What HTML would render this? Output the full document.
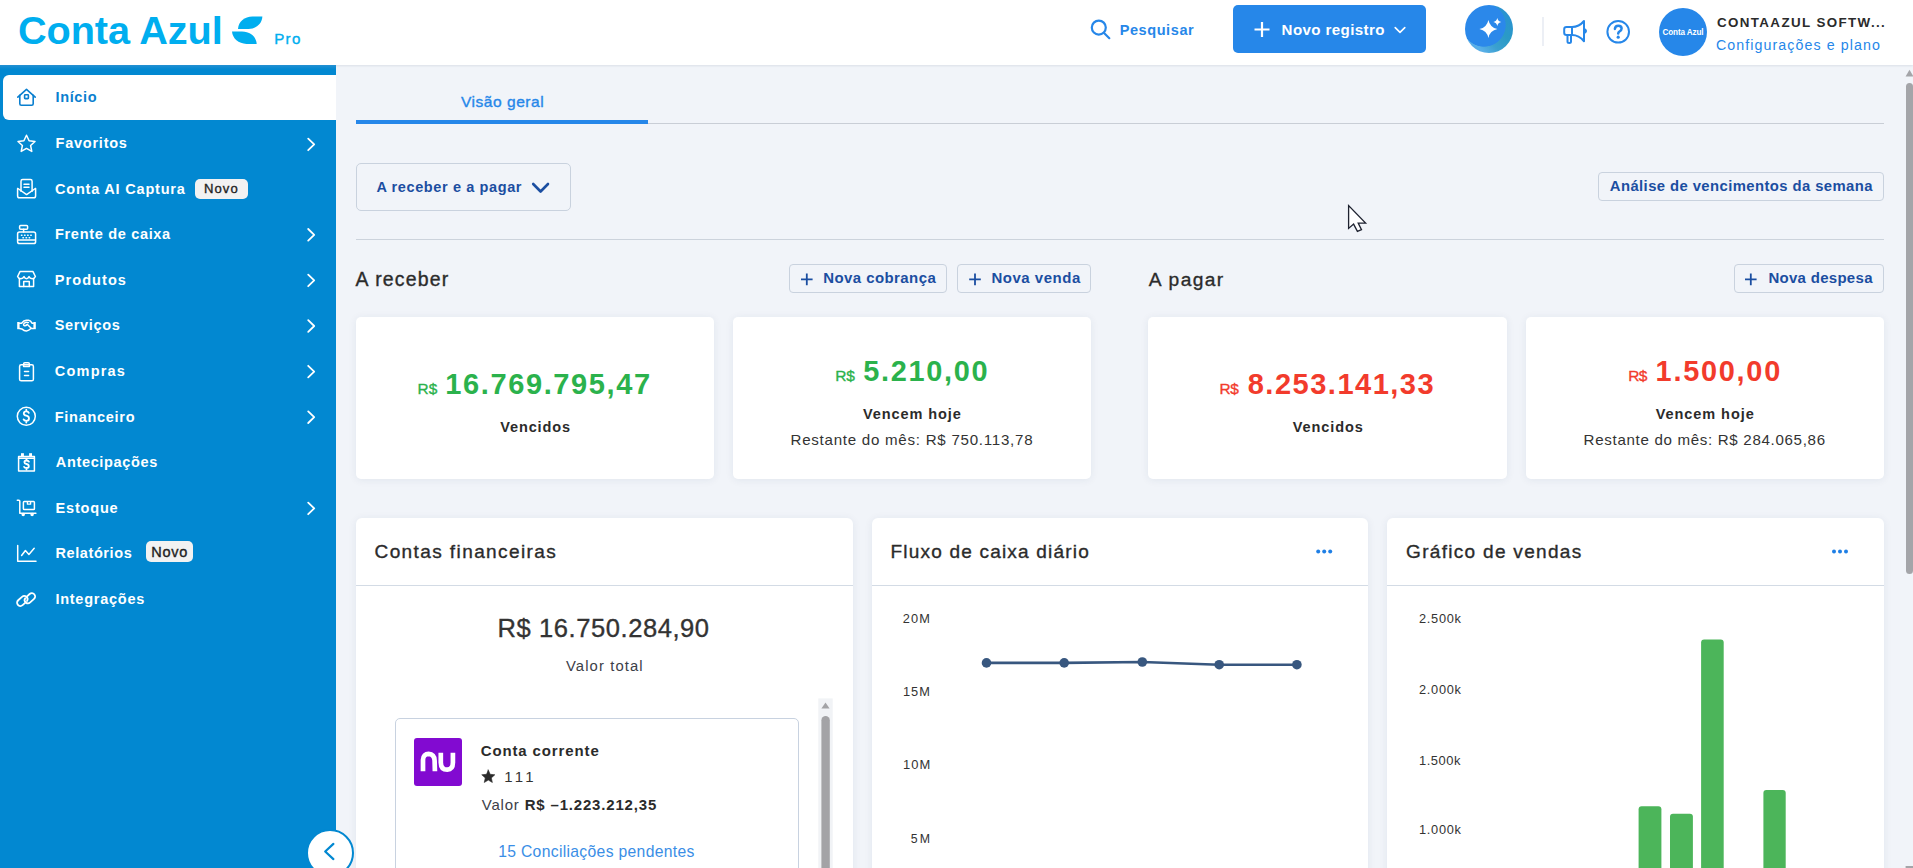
<!DOCTYPE html>
<html lang="pt-BR">
<head>
<meta charset="utf-8">
<title>Conta Azul Pro - Início</title>
<style>
html,body{margin:0;padding:0}
body{width:1913px;height:868px;overflow:hidden;position:relative;background:#f1f4f9;font-family:"Liberation Sans",sans-serif;}
.a{position:absolute;box-sizing:border-box}
.t{position:absolute;white-space:nowrap}
.t b{font-weight:700}
svg{position:absolute;overflow:visible}
</style>
</head>
<body>
<!-- header -->
<div class="a" style="left:0;top:0;width:1913px;height:65px;background:#fff;box-shadow:0 1px 2px rgba(30,50,80,.10)"></div>
<!-- sidebar -->
<div class="a" style="left:0;top:65px;width:336px;height:803px;background:linear-gradient(#2590d2 0,#0288d1 4px)"></div>
<div class="a" style="left:3px;top:75px;width:333px;height:45px;background:#fff;border-radius:6px 0 0 6px"></div>
<!-- tabs -->
<div class="a" style="left:356px;top:123px;width:1528px;height:1px;background:#c9ced6"></div>
<div class="a" style="left:356px;top:120px;width:292px;height:4px;background:#2687e9"></div>
<!-- filter -->
<div class="a" style="left:356px;top:163px;width:215px;height:48px;border:1px solid #c9d2de;border-radius:5px"></div>
<div class="a" style="left:1598px;top:172px;width:286px;height:29px;border:1px solid #c9d2de;border-radius:4px"></div>
<div class="a" style="left:356px;top:239px;width:1528px;height:1px;background:#ccd3dc"></div>
<!-- section buttons -->
<div class="a" style="left:789px;top:264px;width:158px;height:29px;border:1px solid #c9d2de;border-radius:4px"></div>
<div class="a" style="left:957px;top:264px;width:134px;height:29px;border:1px solid #c9d2de;border-radius:4px"></div>
<div class="a" style="left:1734px;top:264px;width:150px;height:29px;border:1px solid #c9d2de;border-radius:4px"></div>
<!-- cards -->
<div class="a" style="left:356px;top:317px;width:358px;height:162px;background:#fff;border-radius:5px;box-shadow:0 1px 9px rgba(30,50,90,.075)"></div>
<div class="a" style="left:733px;top:317px;width:358px;height:162px;background:#fff;border-radius:5px;box-shadow:0 1px 9px rgba(30,50,90,.075)"></div>
<div class="a" style="left:1148px;top:317px;width:359px;height:162px;background:#fff;border-radius:5px;box-shadow:0 1px 9px rgba(30,50,90,.075)"></div>
<div class="a" style="left:1526px;top:317px;width:358px;height:162px;background:#fff;border-radius:5px;box-shadow:0 1px 9px rgba(30,50,90,.075)"></div>
<!-- widgets -->
<div class="a" style="left:356px;top:518px;width:496.7px;height:400px;background:#fff;border-radius:6px;box-shadow:0 1px 9px rgba(30,50,90,.075)"></div>
<div class="a" style="left:871.7px;top:518px;width:496.7px;height:400px;background:#fff;border-radius:6px;box-shadow:0 1px 9px rgba(30,50,90,.075)"></div>
<div class="a" style="left:1387.3px;top:518px;width:496.7px;height:400px;background:#fff;border-radius:6px;box-shadow:0 1px 9px rgba(30,50,90,.075)"></div>
<div class="a" style="left:356px;top:585px;width:496.7px;height:1px;background:#d3dbe5"></div>
<div class="a" style="left:871.7px;top:585px;width:496.7px;height:1px;background:#d3dbe5"></div>
<div class="a" style="left:1387.3px;top:585px;width:496.7px;height:1px;background:#d3dbe5"></div>
<!-- account card -->
<div class="a" style="left:394.5px;top:718px;width:404.5px;height:200px;border:1px solid #c8d2e0;border-radius:5px;background:#fff"></div>
<div class="a" style="left:414px;top:738px;width:48px;height:48px;background:#820ad1;border-radius:3px"></div>
<!-- badges -->
<div class="a" style="left:195px;top:179px;width:53px;height:20px;background:#f2f2f2;border-radius:5px"></div>
<div class="a" style="left:145.5px;top:541px;width:47.5px;height:21px;background:#f2f2f2;border-radius:5px"></div>
<!-- header controls -->
<div class="a" style="left:1233px;top:5px;width:193px;height:48px;background:#2687e9;border-radius:5px"></div>
<div class="a" style="left:1465px;top:5px;width:48px;height:48px;border-radius:50%;background:radial-gradient(circle 22px at 19px 20px,#2b88ea 0,#2b88ea 21.3px,rgba(43,136,234,0) 22px),linear-gradient(225deg,#2b8fd8 0%,#2a9ac6 40%,#3aa0d0 62%,#5ab0e8 80%,#4a9ee8 100%)"></div>
<div class="a" style="left:1542px;top:17px;width:2px;height:29px;background:#eceff5"></div>
<div class="a" style="left:1659px;top:8px;width:48px;height:48px;border-radius:50%;background:#2687e9"></div>
<!-- collapse -->
<div class="a" style="left:306px;top:828.6px;width:48px;height:48px;border-radius:50%;background:#fff;border:2px solid #0288d1"></div>
<!-- page scrollbar -->
<div class="a" style="left:1906px;top:83px;width:7px;height:491px;background:#a4a5a9;border-radius:4px"></div>
<svg width="1913" height="868" viewBox="0 0 1913 868" style="left:0;top:0" fill="none" stroke-linecap="round" stroke-linejoin="round">
<!-- logo leaves -->
<path fill="#00aeef" stroke="none" d="M238,29 C238.5,21.5 244.5,16.6 252.5,16.6 L262.4,16.6 C262,23.5 256.5,29 248.5,29 Z"/>
<path fill="#00aeef" stroke="none" d="M232,31.6 L242,31.6 C250.5,31.6 256.2,37 256.7,43.9 L246.5,43.9 C238.5,43.9 232.5,38.5 232,31.6 Z"/>
<!-- search -->
<g stroke="#2687e9" stroke-width="2.2"><circle cx="1098.8" cy="27.6" r="7"/><path d="M1104.3,33.2 L1109.3,38.2"/></g>
<!-- novo registro plus & chevron -->
<g stroke="#fff" stroke-width="2.2" stroke-linecap="butt"><path d="M1262,22 V37 M1254.5,29.5 H1269.5"/></g>
<path stroke="#fff" stroke-width="1.6" d="M1395.2,27.6 L1400,32.4 L1404.8,27.6"/>
<!-- AI sparkles -->
<path fill="#fff" stroke="none" d="M1488.4,20 Q1489.9,27.5 1497.4,29 Q1489.9,30.5 1488.4,38 Q1486.9,30.5 1479.4,29 Q1486.9,27.5 1488.4,20 Z"/>
<path fill="#fff" stroke="none" d="M1497.3,18 Q1498,21.3 1501.3,22 Q1498,22.7 1497.3,26 Q1496.6,22.7 1493.3,22 Q1496.6,21.3 1497.3,18 Z"/>
<!-- megaphone -->
<g stroke="#2687e9" stroke-width="2">
<path d="M1572,27 H1566.5 Q1564.2,27 1564.2,29.3 V32.7 Q1564.2,35 1566.5,35 H1572 Z"/>
<path d="M1572,27 Q1579,27 1584,21 V41.3 Q1579,35 1572,35"/>
<path d="M1567.5,35 V41.5 Q1567.5,43 1569.2,43 Q1571,43 1571,41.5 V35"/>
<path d="M1585.3,29.6 Q1586.6,31 1585.3,32.4"/>
</g>
<!-- help -->
<g stroke="#2687e9" stroke-width="2"><circle cx="1618.2" cy="31.8" r="10.8"/>
<path stroke-width="2.5" d="M1614.9,28.9 Q1615.2,25.8 1618.3,25.8 Q1621.6,25.8 1621.6,28.6 Q1621.6,30.4 1619.6,31.3 Q1618.2,32 1618.2,33.6"/></g>
<circle cx="1618.2" cy="37.2" r="1.6" fill="#2687e9" stroke="none"/>
<!-- sidebar icons -->
<g stroke="#0a7fcf" stroke-width="1.6">
<path d="M17.8,97.2 L26.5,89.3 L35.2,97.2"/>
<path d="M19.8,95.2 V103.8 Q19.8,105.3 21.3,105.3 H31.7 Q33.2,105.3 33.2,103.8 V95.2"/>
<rect x="24.6" y="94.8" width="3.8" height="3.8" rx="0.6"/>
</g>
<g stroke="#fff" stroke-width="1.5">
<path d="M26.5,135.3 L29.1,140.8 L35,141.5 L30.6,145.5 L31.8,151.4 L26.5,148.4 L21.2,151.4 L22.4,145.5 L18,141.5 L23.9,140.8 Z"/>
<path d="M17.6,188.6 V195.9 Q17.6,197.7 19.4,197.7 H33.8 Q35.6,197.7 35.6,195.9 V188.6"/>
<path d="M17.9,188.5 L26.6,194.6 L35.3,188.5"/>
<path d="M21,191.2 V181.3 Q21,179.6 22.7,179.6 H30.4 Q32.1,179.6 32.1,181.3 V191.2"/>
<path d="M24,184.2 H29 M24,187.2 H29"/>
<rect x="19.6" y="225.6" width="8" height="3.6" rx="1"/>
<path d="M23.6,229.2 V232"/>
<path d="M19.5,232 H33.5 Q35.6,232 35.6,234 V241.7 Q35.6,243.6 33.6,243.6 H19.6 Q17.6,243.6 17.6,241.7 V234 Q17.6,232 19.5,232 Z"/>
<path d="M17.8,240 H35.4"/>
<path d="M21.5,235.3 h0.4 M24.6,235.3 h0.4 M27.7,235.3 h0.4 M30.8,235.3 h0.4 M23,237.7 h0.4 M26.1,237.7 h0.4 M29.2,237.7 h0.4" stroke-width="1.6"/>
<path d="M17.6,276.5 L20,271.6 H33 L35.4,276.5 Q34.6,278.7 32.2,278.7 Q29.8,278.7 29,276.6 Q28.2,278.7 26.5,278.7 Q24.8,278.7 24,276.6 Q23.2,278.7 20.8,278.7 Q18.4,278.7 17.6,276.5 Z"/>
<path d="M19.4,279 V286.6 H33.6 V279"/>
<path d="M23.7,286.6 V281.6 H29.3 V286.6"/>
<rect x="17.2" y="322" width="2.4" height="7.2" fill="#fff" stroke="none"/>
<rect x="33.4" y="322" width="2.4" height="7.2" fill="#fff" stroke="none"/>
<path d="M19.6,323.2 H21.6 Q23.8,320.3 26.3,320.3 H28.6 Q30.8,320.8 32,323.2 H33.4"/>
<path d="M19.6,328.5 L21.8,328.9 Q24.2,331.1 26.5,331 Q28.9,330.7 30.9,328.6 L33.4,328.4"/>
<path d="M28.4,322.6 Q25.8,321.9 24.3,323.3 Q22.9,324.7 24.2,325.6 Q25.5,326.2 27.4,324.4 L31.2,328.3"/>
<rect x="19.6" y="364.8" width="13.8" height="16" rx="1.6"/>
<path d="M23.6,366.4 V364 Q23.6,362.7 24.9,362.7 H28.1 Q29.4,362.7 29.4,364 V366.4 Z"/>
<path d="M24.5,371.6 H28.6 M24.5,375.4 H28.6"/>
<circle cx="26.3" cy="416.3" r="9"/>
<path stroke-width="1.8" d="M28.8,412.8 Q28.2,411.3 26.3,411.3 Q23.8,411.3 23.8,413.4 Q23.8,415.1 26.3,415.7 Q29,416.3 29,418.5 Q29,420.8 26.3,420.8 Q24.1,420.8 23.6,419.4 M26.3,409.7 V411.3 M26.3,420.8 V422.6"/>
<path d="M18.6,456.6 H34.4 V470.9 H18.6 Z"/>
<path d="M18.6,458.2 H34.4" stroke-width="1.6"/>
<rect x="21" y="453.2" width="2.9" height="3.6" fill="#fff" stroke="none"/>
<rect x="29.1" y="453.2" width="2.9" height="3.6" fill="#fff" stroke="none"/>
<path stroke-width="1.8" d="M28.9,461.6 Q28.3,460.5 26.5,460.5 Q24.4,460.5 24.4,462.2 Q24.4,463.6 26.5,464 Q28.8,464.5 28.8,466.2 Q28.8,468 26.5,468 Q24.7,468 24.1,466.9 M26.5,459 V460.5 M26.5,468 V469.5"/>
<path d="M17.3,500.3 H18.8 Q19.8,500.3 19.8,501.3 V513.2 H35.9"/>
<rect x="23.4" y="501.6" width="11" height="8" rx="0.8"/>
<path d="M27.4,501.6 V504.2 H30.6 V501.6" stroke-width="1.3"/>
<circle cx="23.2" cy="514.6" r="1" fill="#fff"/><circle cx="32.1" cy="514.6" r="1" fill="#fff"/>
<path d="M17.7,545.6 V561.3 H36"/>
<path d="M21.6,555.5 L25.4,550.5 L28.9,554.4 L34.2,548.3"/>
<path transform="rotate(-42 22.3 601.0)" d="M23.50,604.30 H19.70 A3.3,3.3 0 0 1 19.70,597.70 H24.90 A3.3,3.3 0 0 1 25.75,604.19" stroke-width="1.8"/>
<path transform="rotate(-42 29.9 598.2)" d="M28.70,594.90 H32.50 A3.3,3.3 0 0 1 32.50,601.50 H27.30 A3.3,3.3 0 0 1 26.45,595.01" stroke-width="1.8"/>
</g>
<!-- sidebar chevrons -->
<g stroke="#fff" stroke-width="1.8">
<path d="M308.2,138.6 L314.2,144.4 L308.2,150.2"/>
<path d="M308.2,229 L314.2,234.8 L308.2,240.6"/>
<path d="M308.2,274.6 L314.2,280.4 L308.2,286.2"/>
<path d="M308.2,320.2 L314.2,326 L308.2,331.8"/>
<path d="M308.2,365.8 L314.2,371.6 L308.2,377.4"/>
<path d="M308.2,411.4 L314.2,417.2 L308.2,423"/>
<path d="M308.2,502.6 L314.2,508.4 L308.2,514.2"/>
</g>
<path stroke="#0288d1" stroke-width="2.2" d="M333.4,843.9 L325.2,851.5 L333.4,859.1"/>
<!-- filter chevron -->
<path stroke="#1b4ea1" stroke-width="2.6" d="M533.2,184 L540.6,191.5 L548,184"/>
<!-- plus icons -->
<g stroke="#1b4ea1" stroke-width="1.8" stroke-linecap="butt">
<path d="M806.8,273.6 V285.2 M801,279.4 H812.6"/>
<path d="M975,273.6 V285.2 M969.2,279.4 H980.8"/>
<path d="M1750.8,273.6 V285.2 M1745,279.4 H1756.6"/>
</g>
<!-- dots menus -->
<g fill="#1f7fe5" stroke="none">
<circle cx="1318.2" cy="551.5" r="2"/><circle cx="1324.2" cy="551.5" r="2"/><circle cx="1330.2" cy="551.5" r="2"/>
<circle cx="1834" cy="551.5" r="2"/><circle cx="1840" cy="551.5" r="2"/><circle cx="1846" cy="551.5" r="2"/>
</g>
<!-- nu logo -->
<g stroke="#fff" stroke-width="4.7" stroke-linecap="butt" stroke-linejoin="miter">
<path d="M423,771.2 V759.8 C423,756 425.4,753.9 428.6,753.9 C432.4,754.1 434.4,756.6 434.6,760.5 L434.9,771.2"/>
<path d="M440.8,752.8 V762.4 C440.9,767.6 443.6,769.7 447.3,769.7 C451.2,769.6 452.9,767 452.9,762.6 V752.8"/>
</g>
<!-- star 111 -->
<path fill="#2b2b2b" stroke="#2b2b2b" stroke-width="0.6" stroke-linejoin="round" d="M488.30,770.00 L490.18,774.31 L494.86,774.77 L491.34,777.89 L492.36,782.48 L488.30,780.10 L484.24,782.48 L485.26,777.89 L481.74,774.77 L486.42,774.31 Z"/>
<!-- inner scrollbar -->
<rect x="818.3" y="698.4" width="14.4" height="170" fill="#f1f3f6" stroke="none"/>
<path fill="#a3a3a6" stroke="none" d="M825.5,702.6 L829.6,708.6 H821.4 Z"/>
<rect x="821.4" y="716" width="8.4" height="160" rx="4.2" fill="#a3a3a6" stroke="none"/>
<!-- line chart -->
<polyline points="986.5,662.9 1064.2,662.9 1142.3,662 1219.2,664.7 1296.9,664.7" stroke="#38577f" stroke-width="2.6"/>
<g fill="#38577f" stroke="none">
<circle cx="986.5" cy="662.9" r="4.8"/><circle cx="1064.2" cy="662.9" r="4.8"/><circle cx="1142.3" cy="662" r="4.8"/><circle cx="1219.2" cy="664.7" r="4.8"/><circle cx="1296.9" cy="664.7" r="4.8"/>
</g>
<!-- bars -->
<g fill="#4cb55a" stroke="none">
<path d="M1638.6,868 V809.3 Q1638.6,806.3 1641.6,806.3 H1658.4 Q1661.4,806.3 1661.4,809.3 V868 Z"/>
<path d="M1670,868 V816.7 Q1670,813.7 1673,813.7 H1689.9 Q1692.9,813.7 1692.9,816.7 V868 Z"/>
<path d="M1701.1,868 V642.4 Q1701.1,639.4 1704.1,639.4 H1720.7 Q1723.7,639.4 1723.7,642.4 V868 Z"/>
<path d="M1763.4,868 V793 Q1763.4,790 1766.4,790 H1782.7 Q1785.7,790 1785.7,793 V868 Z"/>
</g>
<!-- page scrollbar arrows -->
<path fill="#a4a5a9" stroke="none" d="M1909.5,69.8 L1913.5,76.6 H1905.6 Z"/>
<path fill="#a4a5a9" stroke="none" d="M1905.6,866 H1913 V868 H1905.6 Z"/>
</svg>
<div class="t" style="left:18.00px;top:11.40px;font-size:39.68px;line-height:39.68px;font-weight:700;color:#00aeef;letter-spacing:-0.111px">Conta Azul</div>
<div class="t" style="left:274.30px;top:31.20px;font-size:15.12px;line-height:15.12px;font-weight:400;-webkit-text-stroke:0.35px #00aeef;color:#00aeef;letter-spacing:1.250px">Pro</div>
<div class="t" style="left:1119.70px;top:22.69px;font-size:14.53px;line-height:14.53px;font-weight:700;color:#2687e9;letter-spacing:0.575px">Pesquisar</div>
<div class="t" style="left:1281.60px;top:22.20px;font-size:15.12px;line-height:15.12px;font-weight:700;color:#ffffff;letter-spacing:0.383px">Novo registro</div>
<div class="t" style="left:1716.90px;top:15.68px;font-size:13.37px;line-height:13.37px;font-weight:700;color:#2b2b2b;letter-spacing:1.394px">CONTAAZUL SOFTW...</div>
<div class="t" style="left:1715.90px;top:37.94px;font-size:14.24px;line-height:14.24px;font-weight:400;color:#2687e9;letter-spacing:1.075px">Configurações e plano</div>
<div class="t" style="left:55.50px;top:89.69px;font-size:14.53px;line-height:14.53px;font-weight:700;color:#0a7fcf;letter-spacing:0.620px">Início</div>
<div class="t" style="left:55.50px;top:135.69px;font-size:14.53px;line-height:14.53px;font-weight:700;color:#ffffff;letter-spacing:0.762px">Favoritos</div>
<div class="t" style="left:55.00px;top:181.69px;font-size:14.53px;line-height:14.53px;font-weight:700;color:#ffffff;letter-spacing:0.787px">Conta AI Captura</div>
<div class="t" style="left:55.00px;top:226.69px;font-size:14.53px;line-height:14.53px;font-weight:700;color:#ffffff;letter-spacing:0.679px">Frente de caixa</div>
<div class="t" style="left:54.80px;top:272.69px;font-size:14.53px;line-height:14.53px;font-weight:700;color:#ffffff;letter-spacing:1.057px">Produtos</div>
<div class="t" style="left:54.80px;top:317.69px;font-size:14.53px;line-height:14.53px;font-weight:700;color:#ffffff;letter-spacing:0.629px">Serviços</div>
<div class="t" style="left:54.80px;top:363.69px;font-size:14.53px;line-height:14.53px;font-weight:700;color:#ffffff;letter-spacing:1.200px">Compras</div>
<div class="t" style="left:54.80px;top:409.69px;font-size:14.53px;line-height:14.53px;font-weight:700;color:#ffffff;letter-spacing:0.700px">Financeiro</div>
<div class="t" style="left:55.80px;top:454.69px;font-size:14.53px;line-height:14.53px;font-weight:700;color:#ffffff;letter-spacing:0.645px">Antecipações</div>
<div class="t" style="left:55.50px;top:500.69px;font-size:14.53px;line-height:14.53px;font-weight:700;color:#ffffff;letter-spacing:0.817px">Estoque</div>
<div class="t" style="left:55.40px;top:545.69px;font-size:14.53px;line-height:14.53px;font-weight:700;color:#ffffff;letter-spacing:0.600px">Relatórios</div>
<div class="t" style="left:55.40px;top:591.69px;font-size:14.53px;line-height:14.53px;font-weight:700;color:#ffffff;letter-spacing:0.750px">Integrações</div>
<div class="t" style="left:204.00px;top:181.92px;font-size:13.08px;line-height:13.08px;font-weight:400;-webkit-text-stroke:0.35px #222222;color:#222222;letter-spacing:1.067px">Novo</div>
<div class="t" style="left:151.20px;top:544.69px;font-size:14.53px;line-height:14.53px;font-weight:400;-webkit-text-stroke:0.35px #222222;color:#222222;letter-spacing:0.733px">Novo</div>
<div class="t" style="left:460.90px;top:93.83px;font-size:15.55px;line-height:15.55px;font-weight:400;-webkit-text-stroke:0.35px #2687e9;color:#2687e9;letter-spacing:0.530px">Visão geral</div>
<div class="t" style="left:376.40px;top:179.69px;font-size:14.53px;line-height:14.53px;font-weight:700;color:#1b4ea1;letter-spacing:0.606px">A receber e a pagar</div>
<div class="t" style="left:1609.80px;top:179.45px;font-size:14.83px;line-height:14.83px;font-weight:700;color:#1b4ea1;letter-spacing:0.419px">Análise de vencimentos da semana</div>
<div class="t" style="left:355.50px;top:269.51px;font-size:19.48px;line-height:19.48px;font-weight:400;-webkit-text-stroke:0.35px #2b2b2b;color:#2b2b2b;letter-spacing:1.175px">A receber</div>
<div class="t" style="left:1148.80px;top:269.76px;font-size:19.19px;line-height:19.19px;font-weight:400;-webkit-text-stroke:0.35px #2b2b2b;color:#2b2b2b;letter-spacing:1.367px">A pagar</div>
<div class="t" style="left:823.30px;top:271.32px;font-size:14.97px;line-height:14.97px;font-weight:700;color:#1b4ea1;letter-spacing:0.425px">Nova cobrança</div>
<div class="t" style="left:991.40px;top:271.32px;font-size:14.97px;line-height:14.97px;font-weight:700;color:#1b4ea1;letter-spacing:0.544px">Nova venda</div>
<div class="t" style="left:1768.40px;top:271.32px;font-size:14.97px;line-height:14.97px;font-weight:700;color:#1b4ea1;letter-spacing:0.309px">Nova despesa</div>
<div class="t" style="left:417.50px;top:380.95px;font-size:15.41px;line-height:15.41px;font-weight:400;-webkit-text-stroke:0.35px #2bb24c;color:#2bb24c;letter-spacing:0.200px">R$</div>
<div class="t" style="left:445.30px;top:370.39px;font-size:29.07px;line-height:29.07px;font-weight:700;color:#2bb24c;letter-spacing:1.583px">16.769.795,47</div>
<div class="t" style="left:500.20px;top:419.69px;font-size:14.53px;line-height:14.53px;font-weight:700;color:#2b2b2b;letter-spacing:0.886px">Vencidos</div>
<div class="t" style="left:835.30px;top:367.83px;font-size:15.55px;line-height:15.55px;font-weight:400;-webkit-text-stroke:0.35px #2bb24c;color:#2bb24c;letter-spacing:-0.300px">R$</div>
<div class="t" style="left:863.20px;top:356.51px;font-size:28.92px;line-height:28.92px;font-weight:700;color:#2bb24c;letter-spacing:1.700px">5.210,00</div>
<div class="t" style="left:863.10px;top:406.69px;font-size:14.53px;line-height:14.53px;font-weight:700;color:#2b2b2b;letter-spacing:0.890px">Vencem hoje</div>
<div class="t" style="left:790.50px;top:432.20px;font-size:15.12px;line-height:15.12px;font-weight:400;color:#333333;letter-spacing:0.738px">Restante do mês: R$ 750.113,78</div>
<div class="t" style="left:1219.60px;top:380.95px;font-size:15.41px;line-height:15.41px;font-weight:400;-webkit-text-stroke:0.35px #f23b2c;color:#f23b2c;letter-spacing:-0.500px">R$</div>
<div class="t" style="left:1247.70px;top:370.39px;font-size:29.07px;line-height:29.07px;font-weight:700;color:#f23b2c;letter-spacing:1.482px">8.253.141,33</div>
<div class="t" style="left:1292.80px;top:419.69px;font-size:14.53px;line-height:14.53px;font-weight:700;color:#2b2b2b;letter-spacing:0.886px">Vencidos</div>
<div class="t" style="left:1628.20px;top:367.83px;font-size:15.55px;line-height:15.55px;font-weight:400;-webkit-text-stroke:0.35px #f23b2c;color:#f23b2c;letter-spacing:-0.600px">R$</div>
<div class="t" style="left:1655.60px;top:356.51px;font-size:28.92px;line-height:28.92px;font-weight:700;color:#f23b2c;letter-spacing:1.729px">1.500,00</div>
<div class="t" style="left:1655.70px;top:406.69px;font-size:14.53px;line-height:14.53px;font-weight:700;color:#2b2b2b;letter-spacing:0.930px">Vencem hoje</div>
<div class="t" style="left:1583.60px;top:432.20px;font-size:15.12px;line-height:15.12px;font-weight:400;color:#333333;letter-spacing:0.679px">Restante do mês: R$ 284.065,86</div>
<div class="t" style="left:374.50px;top:541.88px;font-size:19.04px;line-height:19.04px;font-weight:400;-webkit-text-stroke:0.35px #2b2b2b;color:#2b2b2b;letter-spacing:1.394px">Contas financeiras</div>
<div class="t" style="left:890.50px;top:541.88px;font-size:19.04px;line-height:19.04px;font-weight:400;-webkit-text-stroke:0.35px #2b2b2b;color:#2b2b2b;letter-spacing:1.185px">Fluxo de caixa diário</div>
<div class="t" style="left:1406.10px;top:541.88px;font-size:19.04px;line-height:19.04px;font-weight:400;-webkit-text-stroke:0.35px #2b2b2b;color:#2b2b2b;letter-spacing:1.288px">Gráfico de vendas</div>
<div class="t" style="left:497.60px;top:616.34px;font-size:25.58px;line-height:25.58px;font-weight:400;-webkit-text-stroke:0.35px #333333;color:#333333;letter-spacing:0.540px">R$ 16.750.284,90</div>
<div class="t" style="left:565.90px;top:659.45px;font-size:14.83px;line-height:14.83px;font-weight:400;color:#3c4048;letter-spacing:1.110px">Valor total</div>
<div class="t" style="left:480.70px;top:744.32px;font-size:14.97px;line-height:14.97px;font-weight:700;color:#2b2b2b;letter-spacing:0.892px">Conta corrente</div>
<div class="t" style="left:504.20px;top:770.32px;font-size:14.97px;line-height:14.97px;font-weight:400;color:#333333;letter-spacing:3.350px">111</div>
<div class="t" style="left:481.70px;top:798.32px;font-size:14.97px;line-height:14.97px;font-weight:400;color:#3c4049;letter-spacing:0.833px">Valor <b style="color:#2b2b2b">R$ –1.223.212,35</b></div>
<div class="t" style="left:498.20px;top:843.71px;font-size:15.70px;line-height:15.70px;font-weight:400;color:#3a8ee6;letter-spacing:0.325px">15 Conciliações pendentes</div>
<div class="t" style="left:902.80px;top:613.17px;font-size:12.79px;line-height:12.79px;font-weight:400;color:#333333;letter-spacing:1.100px">20M</div>
<div class="t" style="left:903.00px;top:686.17px;font-size:12.79px;line-height:12.79px;font-weight:400;color:#333333;letter-spacing:1.000px">15M</div>
<div class="t" style="left:903.00px;top:759.05px;font-size:12.94px;line-height:12.94px;font-weight:400;color:#333333;letter-spacing:1.000px">10M</div>
<div class="t" style="left:910.80px;top:832.54px;font-size:12.35px;line-height:12.35px;font-weight:400;color:#333333;letter-spacing:2.200px">5M</div>
<div class="t" style="left:1419.00px;top:613.17px;font-size:12.79px;line-height:12.79px;font-weight:400;color:#333333;letter-spacing:0.720px">2.500k</div>
<div class="t" style="left:1419.00px;top:684.17px;font-size:12.79px;line-height:12.79px;font-weight:400;color:#333333;letter-spacing:0.720px">2.000k</div>
<div class="t" style="left:1419.00px;top:755.05px;font-size:12.94px;line-height:12.94px;font-weight:400;color:#333333;letter-spacing:0.520px">1.500k</div>
<div class="t" style="left:1419.00px;top:824.17px;font-size:12.79px;line-height:12.79px;font-weight:400;color:#333333;letter-spacing:0.720px">1.000k</div>
<div class="t" style="left:1662.50px;top:29.11px;font-size:8.14px;line-height:8.14px;font-weight:700;color:#ffffff;letter-spacing:-0.111px">Conta Azul</div>
<svg width="1913" height="868" viewBox="0 0 1913 868" style="left:0;top:0">
<path d="M1348.6,205.6 L1348.6,228.4 L1353.6,224.1 L1357.4,231.4 L1361.5,229.6 L1358.2,223.1 L1365.6,223.1 Z" fill="#fff" stroke="#1e2230" stroke-width="1.3" stroke-linejoin="miter"/>
</svg>
</body>
</html>
